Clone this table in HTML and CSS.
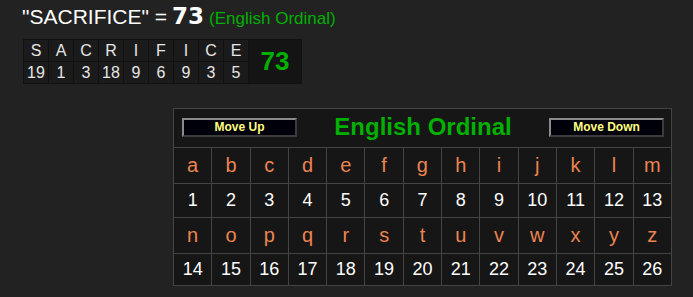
FILE: index.html
```html
<!DOCTYPE html>
<html>
<head>
<meta charset="utf-8">
<link rel="stylesheet" href="styles.css">
</head>
<body>
<div class="page">
  <div class="headline">
    <span class="word">"SACRIFICE" =</span>
    <span class="total">73</span>
    <span class="cipher">(English Ordinal)</span>
  </div>
  <div class="breakdown">
    <div class="bl">S</div><div class="bl">A</div><div class="bl">C</div><div class="bl">R</div><div class="bl">I</div><div class="bl">F</div><div class="bl">I</div><div class="bl">C</div><div class="bl">E</div>
    <div class="bsum">73</div>
    <div class="bn">19</div><div class="bn">1</div><div class="bn">3</div><div class="bn">18</div><div class="bn">9</div><div class="bn">6</div><div class="bn">9</div><div class="bn">3</div><div class="bn">5</div>
  </div>
  <table class="chart">
    <tr class="head-row">
      <td colspan="13">
        <div class="head">
          <button class="btn">Move Up</button>
          <span class="title">English Ordinal</span>
          <button class="btn">Move Down</button>
        </div>
      </td>
    </tr>
    <tr class="letters">
      <td>a</td><td>b</td><td>c</td><td>d</td><td>e</td><td>f</td><td>g</td><td>h</td><td>i</td><td>j</td><td>k</td><td>l</td><td>m</td>
    </tr>
    <tr class="nums">
      <td>1</td><td>2</td><td>3</td><td>4</td><td>5</td><td>6</td><td>7</td><td>8</td><td>9</td><td>10</td><td>11</td><td>12</td><td>13</td>
    </tr>
    <tr class="letters">
      <td>n</td><td>o</td><td>p</td><td>q</td><td>r</td><td>s</td><td>t</td><td>u</td><td>v</td><td>w</td><td>x</td><td>y</td><td>z</td>
    </tr>
    <tr class="nums last">
      <td>14</td><td>15</td><td>16</td><td>17</td><td>18</td><td>19</td><td>20</td><td>21</td><td>22</td><td>23</td><td>24</td><td>25</td><td>26</td>
    </tr>
  </table>
</div>
</body>
</html>
```

FILE: styles.css
```css
html, body {
  margin: 0;
  padding: 0;
  background: #222222;
}

.page {
  font-family: "Liberation Sans", Arial, sans-serif;
  color: #ffffff;
  padding-top: 3px;
  height: 297px;
  box-sizing: border-box;
}

.headline {
  display: flex;
  align-items: baseline;
  margin-left: 22px;
  height: 30px;
}

.word {
  font-size: 21px;
  color: #ffffff;
}

.total {
  font-family: "DejaVu Sans", Verdana, sans-serif;
  font-size: 23px;
  font-weight: bold;
  color: #ffffff;
  margin-left: 5px;
}

.cipher {
  font-size: 17px;
  color: #00b000;
  margin-left: 5px;
}

.breakdown {
  display: grid;
  grid-template-columns: repeat(9, 24px) 52px;
  grid-template-rows: 21px 21px;
  gap: 1px;
  padding: 1px;
  background: #111111;
  width: max-content;
  margin-left: 23px;
  margin-top: 6px;
}

.bl, .bn {
  background: #1b1b1b;
  color: #e6e6e6;
  font-size: 16px;
  display: flex;
  align-items: center;
  justify-content: center;
}

.bsum {
  grid-column: 10;
  grid-row: 1 / span 2;
  background: #141414;
  color: #00b000;
  font-size: 26px;
  font-weight: bold;
  display: flex;
  align-items: center;
  justify-content: center;
}

.chart {
  border-collapse: collapse;
  margin-left: 173px;
  margin-top: 24px;
  width: 499px;
  table-layout: fixed;
  background: #161616;
}

.chart td {
  border: 1px solid #444444;
  text-align: center;
  padding: 0;
}

.head-row td {
  height: 38px;
}

.head {
  display: flex;
  align-items: center;
  justify-content: space-between;
  padding: 0 7px 2px 8px;
}

.btn {
  width: 115px;
  height: 19px;
  box-sizing: border-box;
  background: #00000a;
  color: #ffff80;
  font-family: "Liberation Sans", Arial, sans-serif;
  font-size: 12px;
  font-weight: bold;
  border-style: solid;
  border-width: 2px;
  border-color: #8a8a8a #3c3c3c #3c3c3c #8a8a8a;
  padding: 0;
}

.title {
  font-size: 24px;
  font-weight: bold;
  color: #00b000;
}

.letters td {
  height: 35px;
  font-size: 20px;
  color: #ec8450;
}

.nums td {
  height: 33px;
  font-size: 18px;
  color: #ffffff;
}

.nums.last td {
  height: 31px;
}
```
